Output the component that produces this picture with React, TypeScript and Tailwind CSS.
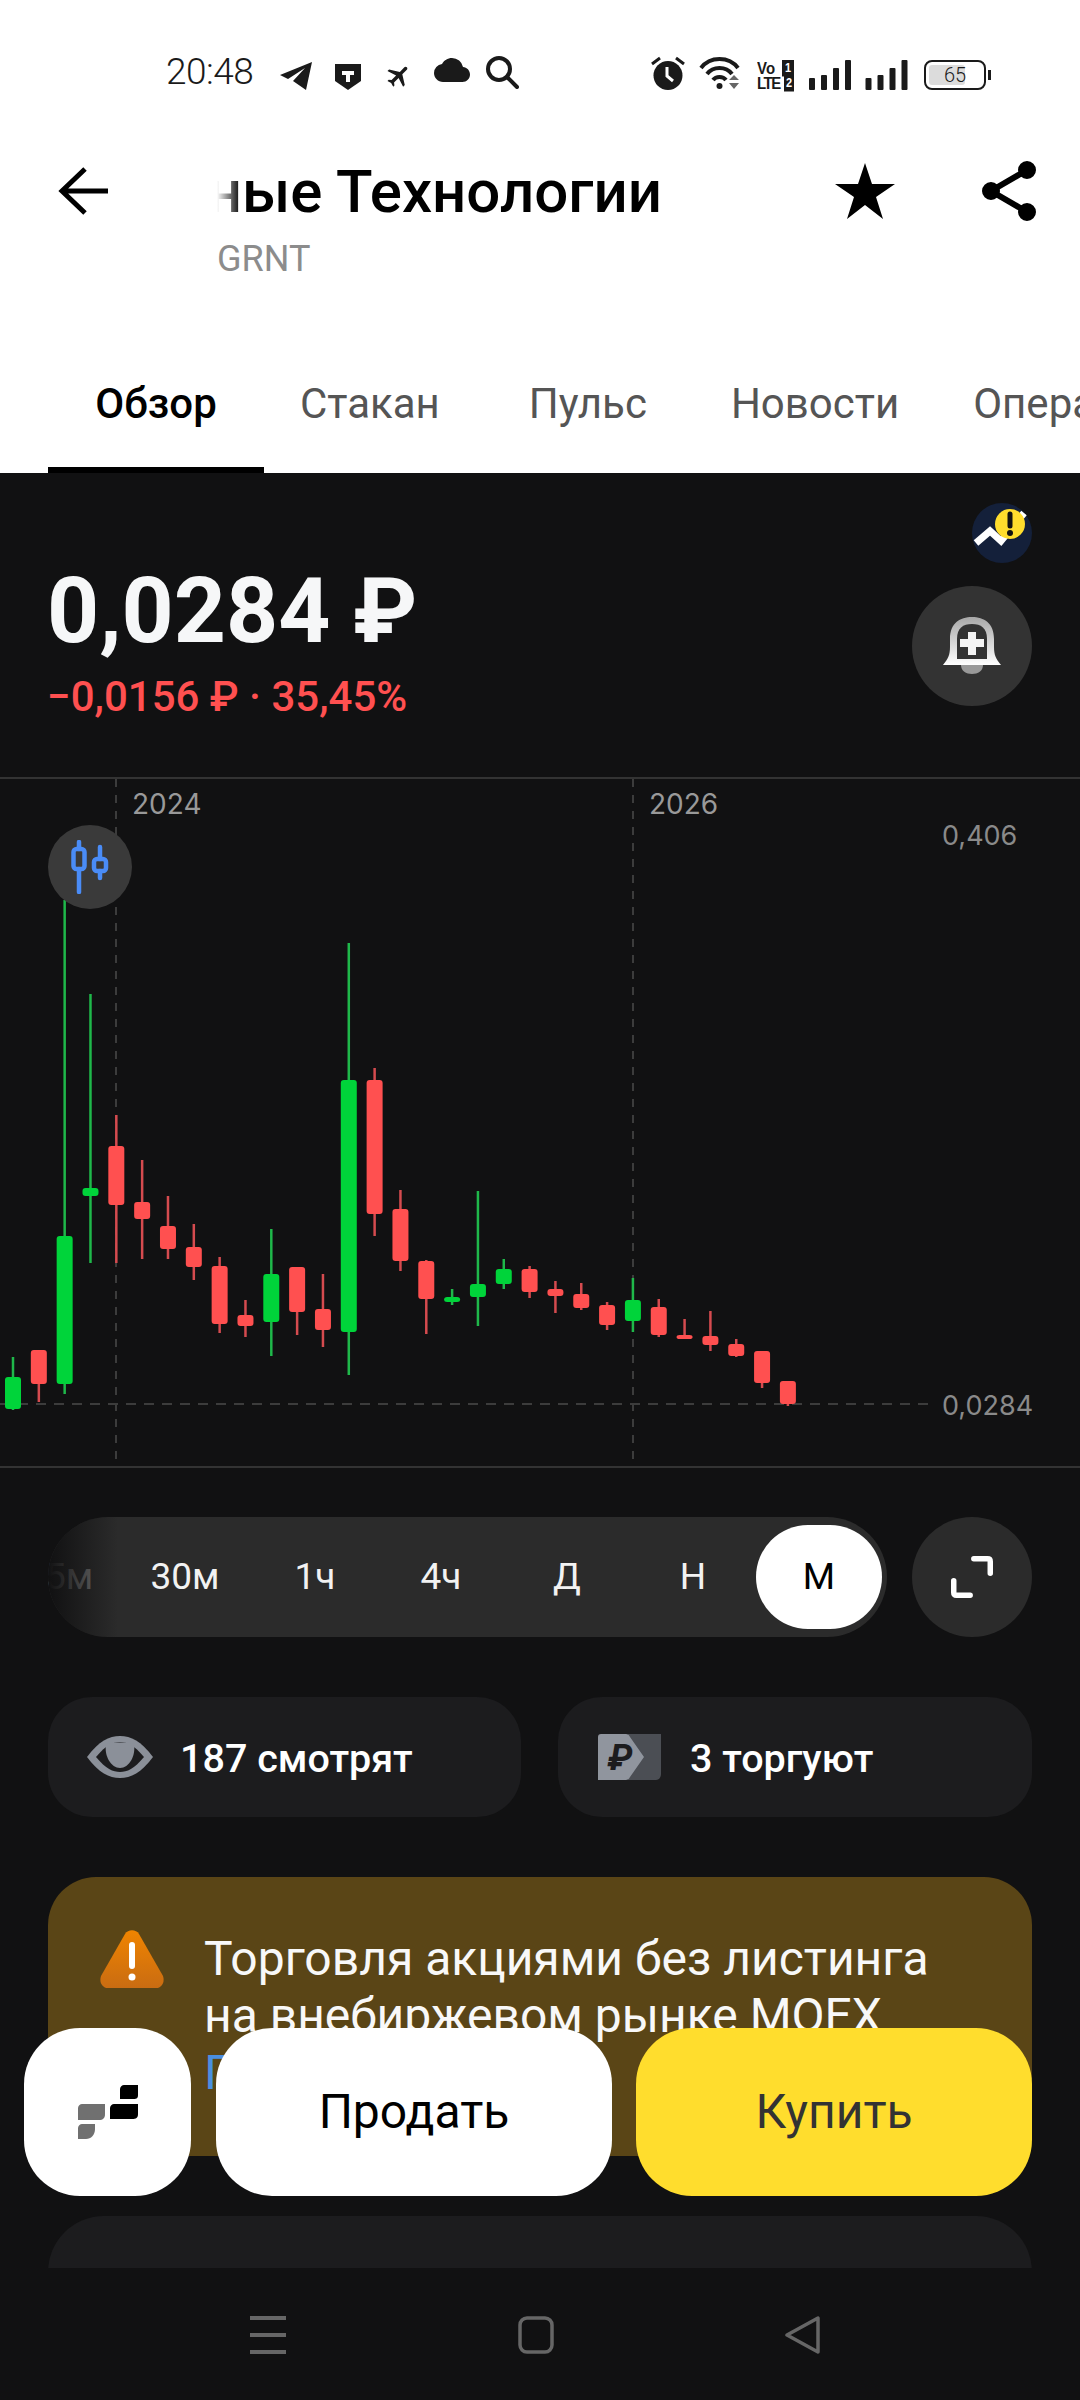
import { MdCloud, MdFlight } from 'react-icons/md'

// [wickTop, bodyTop, bodyBottom, wickBottom, up]
const candles: [number, number, number, number, boolean][] = [
  [1357, 1377, 1409, 1410, true],
  [1350, 1350, 1384, 1402, false],
  [900, 1236, 1384, 1394, true],
  [994, 1188, 1196, 1263, true],
  [1115, 1146, 1205, 1263, false],
  [1160, 1202, 1219, 1259, false],
  [1196, 1226, 1249, 1259, false],
  [1224, 1247, 1267, 1280, false],
  [1257, 1266, 1324, 1333, false],
  [1300, 1315, 1326, 1337, false],
  [1229, 1274, 1322, 1356, true],
  [1267, 1267, 1312, 1335, false],
  [1274, 1309, 1330, 1347, false],
  [943, 1080, 1332, 1375, true],
  [1068, 1080, 1214, 1236, false],
  [1190, 1209, 1261, 1271, false],
  [1260, 1261, 1299, 1334, false],
  [1289, 1297, 1302, 1305, true],
  [1191, 1284, 1297, 1326, true],
  [1259, 1269, 1284, 1289, true],
  [1266, 1269, 1292, 1298, false],
  [1281, 1289, 1296, 1313, false],
  [1283, 1294, 1308, 1310, false],
  [1302, 1305, 1325, 1330, false],
  [1278, 1300, 1321, 1332, true],
  [1299, 1307, 1335, 1337, false],
  [1319, 1335, 1339, 1339, false],
  [1311, 1336, 1345, 1351, false],
  [1339, 1344, 1356, 1357, false],
  [1351, 1351, 1383, 1388, false],
  [1381, 1381, 1404, 1406, false],
]

const tabs = [
  { label: 'Стакан', cls: 'ml-[36px]' },
  { label: 'Пульс', cls: 'ml-[89px]' },
  { label: 'Новости', cls: 'ml-[84px]' },
  { label: 'Операции', cls: 'ml-[74px]' },
]

const frames = ['30м', '1ч', '4ч', 'Д', 'Н']

function StatusBar() {
  return (
    <div className="flex h-[110px] shrink-0 items-end pb-[20px] text-[#1a1a1a]">
      <span className="ml-[166px] w-[87px] text-[37px] leading-none font-light tracking-[-0.5px] whitespace-nowrap">20:48</span>
      <svg className="ml-[27px]" width="32" height="28" viewBox="0 0 32 28" fill="currentColor">
        <path d="M0 13 L32 0 L26 28 L13 19 L25 6 L8 17 Z" />
      </svg>
      <svg className="ml-[23px]" width="26" height="26" viewBox="0 0 26 26" fill="currentColor">
        <path d="M0 0H26V17L13 26L0 17Z" />
        <path d="M7 7H19V11H15V18H11V11H7Z" fill="#fff" />
      </svg>
      <MdFlight className="ml-[24px] rotate-45" size={28} />
      <MdCloud className="ml-[21px] -translate-y-[2px]" size={36} />
      <svg className="ml-[15px] -translate-y-[1px]" width="34" height="34" viewBox="0 0 34 34" fill="none" stroke="currentColor" strokeWidth="4" strokeLinecap="round">
        <circle cx="14" cy="14" r="11" />
        <path d="M22 22 L32 32" />
      </svg>

      <svg className="ml-[132px]" width="34" height="34" viewBox="0 0 34 34" fill="currentColor">
        <circle cx="17" cy="19.5" r="14.5" />
        <path d="M16 11V20L22 25" fill="none" stroke="#fff" strokeWidth="3" />
        <path d="M1 8L9 2M33 8L25 2" stroke="currentColor" strokeWidth="3" />
      </svg>
      <svg className="ml-[14px]" width="42" height="34" viewBox="0 0 42 34" fill="none" stroke="currentColor" strokeWidth="4">
        <path d="M2 12C11 0 30 0 39 12" />
        <path d="M8 18C14 10 27 10 33 18" />
        <path d="M14 24C17 20 24 20 27 24" />
        <circle cx="20.5" cy="30" r="3" fill="currentColor" stroke="none" />
        <path d="M30 24H40L35 19ZM30 27H40L35 33Z" fill="#666" stroke="none" />
      </svg>
      <div className="ml-[16px] flex h-[30px] w-[37px] flex-col text-[15px] leading-[15px] font-bold font-[family-name:'Liberation_Sans',sans-serif]">
        <div className="flex origin-top scale-y-110 justify-between"><span>Vo</span><span className="bg-[#1a1a1a] px-[3px] text-[11px] text-white">1</span></div>
        <div className="flex origin-top scale-y-110 justify-between tracking-[-1.5px]"><span>LTE</span><span className="bg-[#1a1a1a] px-[2px] text-[11px] tracking-normal text-white">2</span></div>
      </div>
      <svg className="ml-[15px]" width="42" height="30" viewBox="0 0 42 30" fill="currentColor">
        <rect x="0" y="18" width="6" height="12" rx="1" />
        <rect x="12" y="15" width="6" height="15" rx="1" />
        <rect x="24" y="8" width="6" height="22" rx="1" />
        <rect x="36" y="0" width="6" height="30" rx="1" />
      </svg>
      <svg className="ml-[14px]" width="43" height="30" viewBox="0 0 42 30" fill="currentColor">
        <rect x="0" y="18" width="6" height="12" rx="1" />
        <rect x="12" y="15" width="6" height="15" rx="1" />
        <rect x="24" y="8" width="6" height="22" rx="1" />
        <rect x="36" y="0" width="6" height="30" rx="1" />
      </svg>
      <div className="relative ml-[16px] flex h-[30px] w-[62px] items-center justify-center rounded-[8px] border-2 border-[#1a1a1a] text-[20px] leading-none font-light">
        <div className="absolute top-[3px] bottom-[3px] left-[3px] w-[36px] rounded-[3px] bg-[#dcdcdc]" />
        <span className="relative">65</span>
        <div className="absolute top-[8px] right-[-7px] h-[10px] w-[3px] bg-[#1a1a1a]" />
      </div>
    </div>
  )
}

function Header() {
  return (
    <div className="flex h-[230px] shrink-0 items-start">
      <svg className="mt-[56px] ml-[58px]" width="52" height="50" viewBox="0 0 52 50" fill="none" stroke="#000" strokeWidth="5">
        <path d="M50 25H5M27 3L4 25L27 47" />
      </svg>
      <div className="ml-[107px] w-[445px] pt-[47px]">
        <div className="relative h-[70px] overflow-hidden">
          <div className="absolute right-0 text-[60px] leading-[70px] font-medium whitespace-nowrap text-black">Инновационные Технологии</div>
          <div className="absolute inset-y-0 left-0 w-[24px] bg-gradient-to-r from-white to-transparent" />
        </div>
        <div className="mt-[12px] text-[36px] leading-[40px] text-[#8c8c8c]">GRNT</div>
      </div>
      <svg className="mt-[53px] ml-[173px]" width="60" height="56" viewBox="0 0 60 56" fill="#000">
        <path d="M30 0L37 21H60L41 34L48 56L30 42L12 56L19 34L0 21H23Z" />
      </svg>
      <svg className="mt-[51px] ml-[86px]" width="58" height="60" viewBox="0 0 58 60" fill="#000" stroke="#000" strokeWidth="6">
        <path d="M46 9L10 30L46 51" fill="none" />
        <circle cx="46" cy="9" r="6" />
        <circle cx="10" cy="30" r="6" />
        <circle cx="46" cy="51" r="6" />
      </svg>
    </div>
  )
}

function Tabs() {
  return (
    <div className="flex h-[133px] shrink-0 items-start overflow-hidden pt-[38px] text-[42px] leading-[52px] whitespace-nowrap text-[#555]">
      <div className="relative ml-[48px] flex h-[95px] w-[216px] shrink-0 justify-center font-medium text-black">
        Обзор
        <div className="absolute inset-x-0 bottom-0 h-[6px] bg-black" />
      </div>
      {tabs.map(t => (
        <div key={t.label} className={`${t.cls} shrink-0`}>{t.label}</div>
      ))}
    </div>
  )
}

function PriceBlock() {
  return (
    <div className="flex h-[304px] shrink-0 justify-between pt-[30px] pr-[48px] pl-[47px]">
      <div className="pt-[58px]">
        <div className="text-[91px] leading-[100px] font-bold text-[#f6f7f8]">0,0284 ₽</div>
        <div className="mt-[12px] text-[42px] leading-[48px] font-medium text-[#ff5050]">−0,0156 ₽ · 35,45%</div>
      </div>
      <div className="flex flex-col items-end gap-[23px]">
        <div className="relative h-[60px] w-[60px] rounded-full bg-[#14203a]">
          <svg className="absolute inset-0" width="60" height="60" viewBox="0 0 60 60">
            <path d="M4 40L18 28L29 38L52 10" fill="none" stroke="#fff" strokeWidth="7" />
            <circle cx="38" cy="21" r="15" fill="#ffdd2d" />
            <path d="M38 11V23" stroke="#111" strokeWidth="5" strokeLinecap="round" />
            <circle cx="38" cy="30" r="3" fill="#111" />
          </svg>
        </div>
        <div className="flex h-[120px] w-[120px] items-center justify-center rounded-full bg-[#333333]">
          <svg width="60" height="62" viewBox="0 0 60 62">
            <defs>
              <linearGradient id="bell" x1="0" y1="0" x2="0" y2="1">
                <stop offset="0" stopColor="#a8a8a8" />
                <stop offset="1" stopColor="#ffffff" />
              </linearGradient>
            </defs>
            <path d="M1 50C6 44 8 40 8 32V24C8 8 18 2 30 2S52 8 52 24V32C52 40 54 44 59 50Z" fill="url(#bell)" />
            <path d="M15 44V24C15 13 21 9 30 9S45 13 45 24V44Z" fill="#333" />
            <path d="M19 50H41C41 56 36 59 30 59S19 56 19 50Z" fill="#999" />
            <path d="M26 17H34V24H42V32H34V40H26V32H18V24H26Z" fill="#f4f4f4" />
          </svg>
        </div>
      </div>
    </div>
  )
}

function Chart() {
  return (
    <div className="relative h-[691px] shrink-0 border-y-2 border-[#333]">
      <svg className="block" width="1080" height="687" viewBox="0 779 1080 687">
        <path d="M116 779V1466M633 779V1466" stroke="#3c3c3c" strokeWidth="2" strokeDasharray="8 8" />
        <path d="M0 1404H930" stroke="#3c3c3c" strokeWidth="2" strokeDasharray="10 8" />
        {candles.map(([wt, bt, bb, wb, up], i) => {
          const x = 13 + i * 25.83
          return (
            <g key={i}>
              <path d={`M${x} ${wt}V${wb}`} stroke={up ? '#1fb84a' : '#d54b4f'} strokeWidth="2.5" />
              <rect x={x - 8} y={bt} width="16" height={Math.max(bb - bt, 4)} rx="3" fill={up ? '#00d43a' : '#ff5050'} />
            </g>
          )
        })}
      </svg>
      <span className="absolute top-[8px] left-[132px] text-[28px] leading-[34px] text-[#999] font-[family-name:Inter,sans-serif]">2024</span>
      <span className="absolute top-[8px] left-[649px] text-[28px] leading-[34px] text-[#999] font-[family-name:Inter,sans-serif]">2026</span>
      <span className="absolute top-[40px] left-[942px] text-[27px] leading-[34px] text-[#8a8a8a] font-[family-name:Inter,sans-serif]">0,406</span>
      <span className="absolute top-[610px] left-[942px] text-[27px] leading-[34px] text-[#8a8a8a] font-[family-name:Inter,sans-serif]">0,0284</span>
      <div className="absolute top-[46px] left-[48px] flex h-[84px] w-[84px] items-center justify-center rounded-full bg-[#3a3a3a]">
        <svg width="40" height="54" viewBox="0 0 40 54" fill="none" stroke="#4a8cf7" strokeWidth="4.5" strokeLinecap="round">
          <path d="M9 2V9M9 29V52" />
          <rect x="3.5" y="9" width="11" height="20" rx="3" />
          <path d="M30 7V19M30 31V38" />
          <rect x="24" y="19" width="12" height="12" rx="3" />
        </svg>
      </div>
    </div>
  )
}

function Timeframes() {
  return (
    <div className="mx-[48px] mt-[49px] flex shrink-0 gap-[25px]">
      <div className="relative flex h-[120px] w-[839px] items-center justify-end overflow-hidden rounded-full bg-[#2b2b2b] pr-[5px] text-[37px] text-[#f2f2f2]">
        <div className="absolute top-0 bottom-0 left-[-42px] flex w-[126px] items-center justify-center text-[#777]">5м</div>
        {frames.map(f => (
          <div key={f} className={`flex w-[126px] justify-center ${f === '30м' ? 'mr-[4px]' : ''}`}>{f}</div>
        ))}
        <div className="flex h-[104px] w-[126px] items-center justify-center rounded-full bg-white text-black">М</div>
        <div className="absolute inset-y-0 left-0 w-[70px] bg-gradient-to-r from-[#111112] to-transparent" />
      </div>
      <div className="flex h-[120px] w-[120px] items-center justify-center rounded-full bg-[#2b2b2b]">
        <svg width="42" height="42" viewBox="0 0 46 46" fill="none" stroke="#fff" strokeWidth="6" strokeLinecap="round" strokeLinejoin="round">
          <path d="M25 3H40C42 3 43 4 43 6V19" />
          <path d="M3 27V40C3 42 4 43 6 43H21" />
        </svg>
      </div>
    </div>
  )
}

function Chips() {
  return (
    <div className="mx-[48px] mt-[60px] flex shrink-0 gap-[37px] text-[39.5px] font-medium text-white">
      <div className="flex h-[120px] w-[473px] items-center rounded-[44px] bg-[#1c1c1e] pl-[39px]">
        <svg width="66" height="42" viewBox="0 0 66 42">
          <path d="M0 21C12 5 22 0 33 0S54 5 66 21C54 37 44 42 33 42S12 37 0 21Z" fill="#8b9099" />
          <path d="M9 21C19 9 26 6 33 6S47 9 57 21C47 33 40 36 33 36S19 33 9 21Z" fill="#1c1c1e" />
          <path d="M19 8C24 6 42 6 47 8C49 20 42 32 33 32S17 20 19 8Z" fill="#8b9099" />
        </svg>
        <span className="ml-[27px] translate-y-[2px]">187 смотрят</span>
      </div>
      <div className="flex h-[120px] w-[474px] items-center rounded-[44px] bg-[#1c1c1e] pl-[40px]">
        <svg width="63" height="46" viewBox="0 0 63 46">
          <path d="M30 0H63V40C63 43 61 46 58 46H30Z" fill="#4b4e54" />
          <path d="M0 3C0 1 1 0 3 0H28C30 0 31 1 32 3L46 23L32 43C31 45 30 46 28 46H0Z" fill="#90959e" />
          <text x="22" y="36" textAnchor="middle" fontSize="36" fontWeight="700" fontStyle="italic" fill="#1c1c1e" fontFamily="Roboto, sans-serif">₽</text>
        </svg>
        <span className="ml-[29px] translate-y-[2px]">3 торгуют</span>
      </div>
    </div>
  )
}

function Notice() {
  return (
    <div className="mx-[48px] mt-[60px] flex h-[279px] shrink-0 overflow-hidden rounded-[48px] bg-[#5a4516] pt-[53px] pl-[52px]">
      <svg className="shrink-0" width="64" height="58" viewBox="0 0 64 58">
        <defs>
          <linearGradient id="warn" x1="0" y1="0" x2="0" y2="1">
            <stop offset="0" stopColor="#f08400" />
            <stop offset="1" stopColor="#c96c12" />
          </linearGradient>
        </defs>
        <path d="M25 4C28 -1 36 -1 39 4L63 46C65 52 62 58 56 58H8C2 58 -1 52 1 46Z" fill="url(#warn)" />
        <path d="M32 15V36" stroke="#fff" strokeWidth="6" strokeLinecap="round" />
        <circle cx="32" cy="47" r="3.5" fill="#fff" />
      </svg>
      <div className="ml-[40px] text-[48px] leading-[57px] whitespace-nowrap text-[#f8f8f8]">
        <div>Торговля акциями без листинга</div>
        <div>на внебиржевом рынке MOEX</div>
        <div className="text-[#4a8fe0]">Подробнее</div>
      </div>
    </div>
  )
}

function ActionBar() {
  return (
    <div className="absolute top-[2028px] left-[24px] flex gap-[24px] text-[48px]">
      <div className="flex h-[168px] w-[167px] items-center justify-center rounded-[56px] bg-white">
        <svg width="60" height="54" viewBox="0 0 60 54">
          <path d="M4 19H27V29C27 33 25 35 21 35H0V23C0 21 2 19 4 19Z" fill="#707070" />
          <path d="M4 39H17V44C17 50 13 54 8 54H0V43C0 41 2 39 4 39Z" fill="#707070" />
          <path d="M46 0H60V10C60 14 58 14 54 14H42V4C42 2 44 0 46 0Z" fill="#000" />
          <path d="M36 19H60V29C60 33 58 34 54 34H32V23C32 21 34 19 36 19Z" fill="#000" />
        </svg>
      </div>
      <div className="ml-[1px] flex h-[168px] w-[396px] items-center justify-center rounded-[56px] bg-white text-black">Продать</div>
      <div className="flex h-[168px] w-[396px] items-center justify-center rounded-[56px] bg-[#ffdd2d] text-[#333]">Купить</div>
    </div>
  )
}

function NavBar() {
  return (
    <div className="flex h-[132px] shrink-0 items-start bg-[#111112] pt-[48px]">
      <svg className="ml-[250px]" width="36" height="38" viewBox="0 0 36 38" stroke="#666" strokeWidth="4">
        <path d="M0 2H36M0 19H36M0 36H36" />
      </svg>
      <svg className="ml-[232px]" width="36" height="38" viewBox="0 0 36 38" fill="none" stroke="#666" strokeWidth="3.5">
        <rect x="2" y="2" width="32" height="34" rx="7" />
      </svg>
      <svg className="ml-[231px]" width="36" height="38" viewBox="0 0 36 38" fill="none" stroke="#666" strokeWidth="3.5" strokeLinejoin="round">
        <path d="M33 2V36L2 19Z" />
      </svg>
    </div>
  )
}

export default function App() {
  return (
    <div className="relative flex h-[2400px] w-[1080px] flex-col overflow-hidden bg-white font-[family-name:Roboto,sans-serif]">
      <StatusBar />
      <Header />
      <Tabs />
      <div className="flex flex-1 flex-col overflow-hidden bg-[#111112]">
        <PriceBlock />
        <Chart />
        <Timeframes />
        <Chips />
        <Notice />
        <div className="mx-[48px] mt-[60px] h-[300px] shrink-0 rounded-[56px] bg-[#1c1c1e]" />
      </div>
      <NavBar />
      <ActionBar />
    </div>
  )
}
